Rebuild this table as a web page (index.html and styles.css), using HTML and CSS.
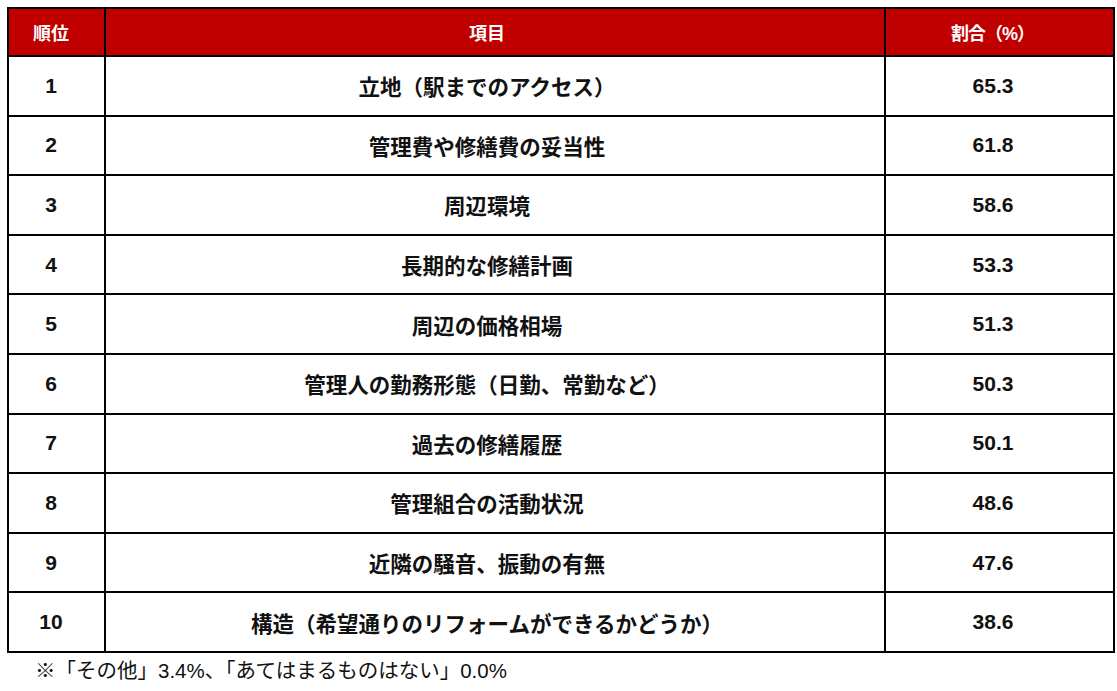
FILE: index.html
```html
<!DOCTYPE html>
<html lang="ja">
<head>
<meta charset="utf-8">
<title>順位表</title>
<link rel="stylesheet" href="styles.css">
</head>
<body>
<table class="rank-table">
  <colgroup>
    <col class="c-rank">
    <col class="c-item">
    <col class="c-pct">
  </colgroup>
  <thead>
    <tr><th class="h-rank">順位</th><th class="h-item">項目</th><th class="h-pct">割合（%）</th></tr>
  </thead>
  <tbody>
    <tr><td class="rank">1</td><td class="item">立地（駅までのアクセス）</td><td class="pct">65.3</td></tr>
    <tr><td class="rank">2</td><td class="item">管理費や修繕費の妥当性</td><td class="pct">61.8</td></tr>
    <tr><td class="rank">3</td><td class="item">周辺環境</td><td class="pct">58.6</td></tr>
    <tr><td class="rank">4</td><td class="item">長期的な修繕計画</td><td class="pct">53.3</td></tr>
    <tr><td class="rank">5</td><td class="item">周辺の価格相場</td><td class="pct">51.3</td></tr>
    <tr><td class="rank">6</td><td class="item">管理人の勤務形態（日勤、常勤など）</td><td class="pct">50.3</td></tr>
    <tr><td class="rank">7</td><td class="item">過去の修繕履歴</td><td class="pct">50.1</td></tr>
    <tr><td class="rank">8</td><td class="item">管理組合の活動状況</td><td class="pct">48.6</td></tr>
    <tr><td class="rank">9</td><td class="item">近隣の騒音、振動の有無</td><td class="pct">47.6</td></tr>
    <tr><td class="rank">10</td><td class="item">構造（希望通りのリフォームができるかどうか）</td><td class="pct">38.6</td></tr>
  </tbody>
</table>
<p class="note">※「その他」3.4%、「あてはまるものはない」0.0%</p>
</body>
</html>
```
FILE: styles.css
```css
html, body {
  margin: 0;
  padding: 0;
  background: #ffffff;
}
body {
  padding: 7px 0 0 7px;
  font-family: "Liberation Sans", "Noto Sans CJK JP", sans-serif;
  color: #000;
}
.rank-table {
  border-collapse: collapse;
  table-layout: fixed;
  width: 1106px;
  border: 2px solid #000;
}
.c-rank { width: 97px; }
.c-item { width: 780px; }
.c-pct { width: 229px; }
.rank-table th,
.rank-table td {
  border: 2px solid #000;
  text-align: center;
  vertical-align: middle;
  padding: 0;
  font-weight: 700;
}
.rank-table th {
  background: #c00000;
  color: #ffffff;
  font-size: 18px;
  height: 46px;
}
.rank-table .h-rank { padding-right: 11px; }
.rank-table .h-item { padding-right: 16px; }
.rank-table .h-pct { padding-right: 14px; letter-spacing: -1px; }
.rank-table td {
  height: 57.6px;
  color: #111;
}
.rank-table .rank,
.rank-table .pct {
  font-size: 21px;
}
.rank-table .rank { padding-right: 11px; }
.rank-table .pct { padding-right: 13px; }
.rank-table .item {
  font-size: 21.5px;
  padding-right: 16px;
}
.note {
  margin: 6px 0 0 28px;
  font-size: 20.5px;
  line-height: 24px;
  font-weight: 400;
  color: #111;
}
```
